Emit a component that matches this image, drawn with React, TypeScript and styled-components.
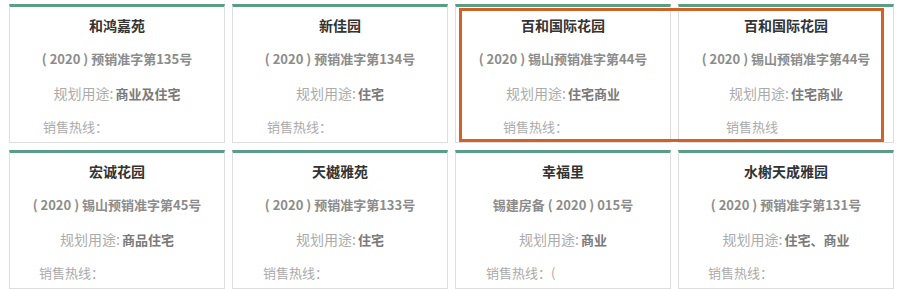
import React from 'react';
import styled, { createGlobalStyle } from 'styled-components';

interface Project {
  name: string;
  permit: string;
  usage: string;
  hotline: string;
  hotlineIndent: number;
}

const projects: Project[] = [
  { name: '和鸿嘉苑', permit: '( 2020 ) 预销准字第135号', usage: '商业及住宅', hotline: '销售热线：', hotlineIndent: 33 },
  { name: '新佳园', permit: '( 2020 ) 预销准字第134号', usage: '住宅', hotline: '销售热线：', hotlineIndent: 34 },
  { name: '百和国际花园', permit: '( 2020 ) 锡山预销准字第44号', usage: '住宅商业', hotline: '销售热线：', hotlineIndent: 47 },
  { name: '百和国际花园', permit: '( 2020 ) 锡山预销准字第44号', usage: '住宅商业', hotline: '销售热线', hotlineIndent: 47 },
  { name: '宏诚花园', permit: '( 2020 ) 锡山预销准字第45号', usage: '商品住宅', hotline: '销售热线：', hotlineIndent: 29 },
  { name: '天樾雅苑', permit: '( 2020 ) 预销准字第133号', usage: '住宅', hotline: '销售热线：', hotlineIndent: 30 },
  { name: '幸福里', permit: '锡建房备 ( 2020 ) 015号', usage: '商业', hotline: '销售热线：(', hotlineIndent: 30 },
  { name: '水榭天成雅园', permit: '( 2020 ) 预销准字第131号', usage: '住宅、商业', hotline: '销售热线：', hotlineIndent: 29 },
];

const App = () => {
  return (
    <>
      <GlobalStyle />
      <StyledPage>
        <StyledGrid>
          {projects.map((p, i) => (
            <StyledCard key={i}>
              <StyledTitle>{p.name}</StyledTitle>
              <StyledPermit>{p.permit}</StyledPermit>
              <StyledUsage>
                <StyledUsageLabel>规划用途:</StyledUsageLabel>
                <StyledUsageValue>{p.usage}</StyledUsageValue>
              </StyledUsage>
              <StyledHotline $indent={p.hotlineIndent}>{p.hotline}</StyledHotline>
            </StyledCard>
          ))}
        </StyledGrid>
        <StyledHighlight />
      </StyledPage>
    </>
  );
};

const GlobalStyle = createGlobalStyle`
  html, body {
    margin: 0;
    padding: 0;
    background: #ffffff;
  }
  body {
    font-family: "Noto Sans CJK SC", "Noto Sans", sans-serif;
  }
`;
const StyledPage = styled.div`
  position: relative;
  width: 900px;
  height: 289px;
  padding: 4px 0 0 9px;
  box-sizing: border-box;
  overflow: hidden;
`;
const StyledGrid = styled.div`
  display: grid;
  grid-template-columns: repeat(4, 216px);
  grid-auto-rows: 139px;
  column-gap: 7px;
  row-gap: 7px;
`;
const StyledCard = styled.div`
  display: flex;
  flex-direction: column;
  align-items: center;
  box-sizing: border-box;
  padding-top: 1px;
  border: 1px solid #dedede;
  border-top: 3px solid #5b9e86;
  background: #ffffff;
`;
const StyledLine = styled.div`
  height: 34px;
  line-height: 34px;
  white-space: pre;
`;
const StyledTitle = styled(StyledLine)`
  font-size: 14px;
  font-weight: 700;
  color: #333333;
`;
const StyledPermit = styled(StyledLine)`
  font-size: 13px;
  font-weight: 700;
  color: #8c8c8c;
`;
const StyledUsage = styled(StyledLine)`
  display: flex;
  align-items: baseline;
`;
const StyledUsageLabel = styled.span`
  font-size: 14px;
  color: #ababab;
  margin-right: 2px;
`;
const StyledUsageValue = styled.span`
  font-size: 13px;
  font-weight: 700;
  color: #7a7a7a;
`;
const StyledHotline = styled(StyledLine)<{ $indent: number }>`
  align-self: stretch;
  padding-left: ${(p) => p.$indent}px;
  font-size: 13px;
  color: #ababab;
`;
const StyledHighlight = styled.div`
  position: absolute;
  left: 459px;
  top: 8px;
  width: 425px;
  height: 134px;
  box-sizing: border-box;
  border: 3px solid #cf6226;
  pointer-events: none;
`;

export default App;
